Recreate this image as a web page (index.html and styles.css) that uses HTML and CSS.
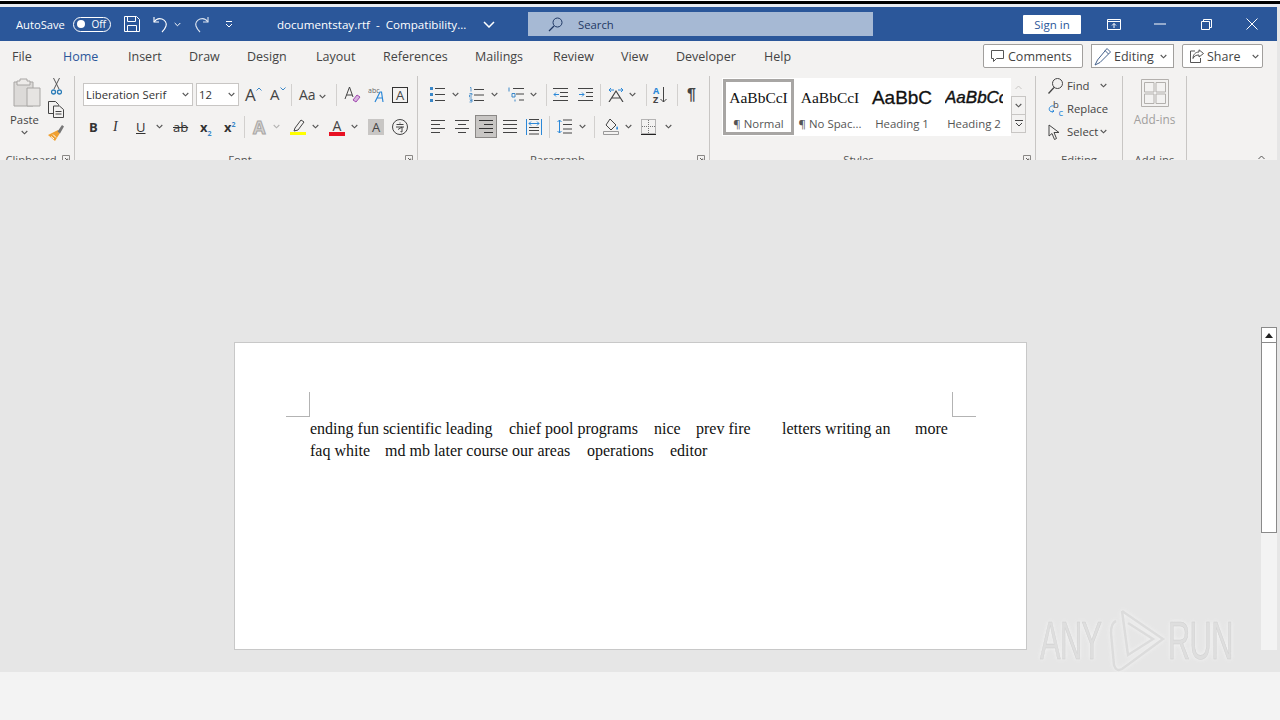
FILE: index.html
```html
<!DOCTYPE html>
<html lang="en">
<head>
    <meta charset="UTF-8">
    <title>documentstay.rtf - Compatibility Mode - Word</title>
    <link rel="stylesheet" href="styles.css">
</head>
<body>
<svg class="defs" width="0" height="0">
    <symbol id="chev" viewBox="0 0 7 5"><path d="M.7 1 3.5 3.8 6.3 1" fill="none" stroke="#555" stroke-width="1.1"/></symbol>
    <symbol id="launch" viewBox="0 0 8 8"><path d="M.5.5h7v7h-7z" fill="none" stroke="#8a8886"/><path d="M3 3l2.5 2.5M5.7 3.6v2.1H3.6" fill="none" stroke="#605e5c"/></symbol>
</svg>
<div class="app">
    <div class="edge-top"></div>

    <!-- Title bar -->
    <header class="titlebar">
        <span class="autosave">AutoSave</span>
        <span class="toggle"><i class="knob"></i>Off</span>
        <svg width="16" height="16" viewBox="0 0 16 16" fill="none" stroke="#fff"><path d="M.5.5h12l3 3v12H.5z"/><path d="M3.5.5v5h8v-5M3.5 15.5v-6h9v6"/></svg>
        <svg width="16" height="17" viewBox="0 0 16 17" fill="none" stroke="#fff" stroke-width="1.1"><path d="M1 1v5h5"/><path d="M1 6c2-3 5-4 8-3 3 1 5 4 4 7-.6 2-2 4-4 6"/></svg>
        <svg width="7" height="5" viewBox="0 0 7 5"><path d="M.7 1 3.5 3.8 6.3 1" fill="none" stroke="#fff"/></svg>
        <svg width="16" height="17" viewBox="0 0 16 17" fill="none" stroke="#dce4f0" stroke-width="1.1"><path d="M15 1v5h-5"/><path d="M15 6c-2-3-5-4-8-3-3 1-5 4-4 7 .6 2 2 4 4 6"/></svg>
        <svg width="8" height="8" viewBox="0 0 8 8" fill="none" stroke="#fff"><path d="M1 1.5h6M1 4l3 3 3-3"/></svg>
        <span class="doc-title">documentstay.rtf &nbsp;-&nbsp; Compatibility...</span>
        <svg width="12" height="7" viewBox="0 0 12 7" fill="none" stroke="#fff" stroke-width="1.5"><path d="M1 1l5 5 5-5"/></svg>
        <div class="search">
            <svg width="15" height="15" viewBox="0 0 15 15" fill="none" stroke="#1f3864"><circle cx="9.5" cy="5.5" r="4.5"/><path d="M6 9l-5 5" stroke-width="1.3"/></svg>
            <span>Search</span>
        </div>
        <span class="signin">Sign in</span>
        <svg width="14" height="11" viewBox="0 0 14 11" fill="none" stroke="#fff"><path d="M.5.5h13v10H.5zM.5 2.5h13M7 9V4.5M5 6.5l2-2 2 2"/></svg>
        <svg width="12" height="2" viewBox="0 0 12 2"><path d="M0 1h12" stroke="#fff"/></svg>
        <svg width="11" height="11" viewBox="0 0 11 11" fill="none" stroke="#fff"><path d="M.5 2.5h8v8h-8zM2.5 2.5v-2h8v8h-2"/></svg>
        <svg width="12" height="12" viewBox="0 0 12 12" fill="none" stroke="#fff"><path d="M.5.5l11 11M11.5.5l-11 11"/></svg>
    </header>

    <!-- Tabs -->
    <nav class="tabbar">
        <div class="tabs">
            <a>File</a><a class="active">Home</a><a>Insert</a><a>Draw</a><a>Design</a><a>Layout</a><a>References</a><a>Mailings</a><a>Review</a><a>View</a><a>Developer</a><a>Help</a>
        </div>
        <div class="actions">
            <button class="btn btn-comments">
                <svg width="13" height="12" viewBox="0 0 13 12" fill="none" stroke="#555"><path d="M.5.5h12v8H5.5l-3 3v-3h-2z"/></svg>Comments
            </button>
            <button class="btn btn-editing">
                <svg width="18" height="19" viewBox="0 0 18 19" fill="none" stroke="#44618c"><path d="M13 1.5l3.5 3.5L6 15.5 1 18l2.5-5z"/><path d="M11 3.5L14.5 7"/></svg>Editing
                <svg class="edit-chev" width="7" height="5"><use href="#chev"/></svg>
            </button>
            <button class="btn btn-share">
                <svg width="14" height="14" viewBox="0 0 14 14" fill="none" stroke="#555"><path d="M9 .8l4.5 3.7L9 8V6C6 6 4 7 3 9.5 3 5.5 5.5 3 9 3z"/><path d="M5 2H.5v11.5h10V9"/></svg>Share
                <svg class="share-chev" width="7" height="5"><use href="#chev"/></svg>
            </button>
        </div>
    </nav>

    <!-- Ribbon -->
    <section class="ribbon">
        <div class="group g-clip">
            <div class="clip-body">
                <div class="paste">
                    <svg class="paste-ico" width="28" height="29" viewBox="0 0 28 29"><path d="M1 4h19v24H1z" fill="#dcdad8" stroke="#a8a6a4"/><path d="M7 1h7v2h3v4H4V3h3z" fill="#edebe9" stroke="#a8a6a4"/><path d="M14 10h13v18H14z" fill="#e6e4e2" stroke="#a8a6a4"/></svg>
                    <span>Paste</span>
                    <svg width="7" height="5"><use href="#chev"/></svg>
                </div>
                <div class="clip-tools">
                    <svg width="11" height="17" viewBox="0 0 11 17" fill="none"><path d="M2.5 0L8 11M8.5 0L3 11" stroke="#555"/><circle cx="2.5" cy="14" r="2" stroke="#2b7cb8" stroke-width="1.3"/><circle cx="8.5" cy="14" r="2" stroke="#2b7cb8" stroke-width="1.3"/></svg>
                    <svg width="16" height="17" viewBox="0 0 16 17" fill="none" stroke="#444"><path d="M6 12.5H.5V.5h7l3 3v1"/><path d="M5.5 5h6l4 3.5v8h-10zM7.5 10.5h6M7.5 13h6"/></svg>
                    <svg width="16" height="17" viewBox="0 0 16 17"><path d="M10 6L0 11l7 6 5-8z" fill="#f0a030"/><path d="M3 12.500l3 2.500M5 10.500l3 3" stroke="#fff"/><path d="M9.5 7.5L14 1l2 1.500-4 7z" fill="#777"/></svg>
                </div>
            </div>
            <div class="group-label"><span>Clipboard</span><svg width="8" height="8"><use href="#launch"/></svg></div>
        </div>

        <div class="group g-font">
            <div class="row font-row1">
                <div class="combo combo-font">Liberation Serif<svg width="7" height="5"><use href="#chev"/></svg></div>
                <div class="combo combo-size">12<svg width="7" height="5"><use href="#chev"/></svg></div>
                <span class="glyph glyph-big">A<svg width="6" height="4" viewBox="0 0 6 4" fill="none" stroke="#3a87c8"><path d="M.5 3.5L3 1l2.5 2.5"/></svg></span>
                <span class="glyph glyph-mid">A<svg width="6" height="4" viewBox="0 0 6 4" fill="none" stroke="#3a87c8"><path d="M.5.5L3 3l2.5-2.5"/></svg></span>
                <i class="sep"></i>
                <span class="glyph glyph-aa">Aa<svg width="7" height="5"><use href="#chev"/></svg></span>
                <i class="sep"></i>
                <svg width="17" height="17" viewBox="0 0 17 17" fill="none"><path d="M1 13L5.5 1 9 11M2.5 9h5.500" stroke="#444"/><path d="M9 14l4-5 3 2-4 5z" fill="#d8b4e0" stroke="#a24bb0"/></svg>
                <svg width="17" height="17" viewBox="0 0 17 17"><text x="0" y="7" class="svg-abc">abc</text><path d="M7 16L12 6h1.5l1.5 10M9 12h5.5" fill="none" stroke="#2b88d8" stroke-width="1.2"/></svg>
                <span class="glyph-box">A</span>
            </div>
            <div class="row font-row2">
                <b class="fmt">B</b>
                <i class="fmt fmt-i">I</i>
                <span class="fmt fmt-u">U</span>
                <svg width="7" height="5"><use href="#chev"/></svg>
                <span class="fmt fmt-ab">ab</span>
                <b class="fmt fmt-x">x<sub>2</sub></b>
                <b class="fmt fmt-x">x<sup>2</sup></b>
                <i class="sep"></i>
                <span class="text-effect">A</span>
                <svg class="chev-off" width="7" height="5"><use href="#chev"/></svg>
                <svg width="17" height="17" viewBox="0 0 17 17"><path d="M5 10l6-8 3 2-6 8-4 1z" fill="none" stroke="#444"/><path d="M0 14h16v3H0z" fill="#ffff00"/></svg>
                <svg width="7" height="5"><use href="#chev"/></svg>
                <span class="color-a">A</span>
                <svg width="7" height="5"><use href="#chev"/></svg>
                <span class="shade-a">A</span>
                <svg width="16" height="16" viewBox="0 0 16 16" fill="none" stroke="#444"><circle cx="8" cy="8" r="7.5"/><path d="M4.5 5.5h7M8 3.5v1M4 8h8M6 10.5l4-2.5v5l-1.5-.5"/></svg>
            </div>
            <div class="group-label"><span>Font</span><svg width="8" height="8"><use href="#launch"/></svg></div>
        </div>

        <div class="group g-para">
            <div class="row para-row1">
                <svg width="15" height="15" viewBox="0 0 15 15" fill="none" stroke="#444"><path d="M0 0h3v3H0zM0 6h3v3H0zM0 12h3v3H0z" fill="#3a87c8" stroke="none"/><path d="M5 1.5h10M5 7.5h10M5 13.5h10"/></svg>
                <svg width="7" height="5"><use href="#chev"/></svg>
                <svg width="15" height="16" viewBox="0 0 15 16" fill="none" stroke="#444"><path d="M5 2.5h10M5 8h10M5 13.5h10"/><path d="M1 .5h1v4M.5 6.5H3V8H.5v2H3M.5 12H3v3H.5M1 13.5h2" stroke="#3a87c8" stroke-width=".8"/></svg>
                <svg width="7" height="5"><use href="#chev"/></svg>
                <svg width="16" height="16" viewBox="0 0 16 16" fill="none" stroke="#444"><path d="M5 1.5h11M8 7h8M11 13h5"/><path d="M1 .5v4M4 6.5h3V10H4zM7 12.5v2" stroke="#3a87c8"/></svg>
                <svg width="7" height="5"><use href="#chev"/></svg>
                <i class="sep"></i>
                <svg width="15" height="13" viewBox="0 0 15 13" fill="none" stroke="#444"><path d="M0 .5h15M7 4.5h8M7 8.5h8M0 12.5h15"/><path d="M6 6.5H1M3 4.5l-2 2 2 2" stroke="#2b88d8"/></svg>
                <svg width="15" height="13" viewBox="0 0 15 13" fill="none" stroke="#444"><path d="M0 .5h15M8 4.5h7M8 8.5h7M0 12.5h15"/><path d="M1 6.5h5M4 4.5l2 2-2 2" stroke="#2b88d8"/></svg>
                <i class="sep"></i>
                <svg width="16" height="15" viewBox="0 0 16 15" fill="none"><path d="M1 15l7-11 7 11M4 11h8" stroke="#444" stroke-width="1.2"/><path d="M1 3h5M3 1L1 3l2 2M15 3h-5M13 1l2 2-2 2" stroke="#2b88d8"/></svg>
                <svg width="7" height="5"><use href="#chev"/></svg>
                <i class="sep"></i>
                <span class="sort"><span class="sort-az"><em>A</em><span>Z</span></span><svg width="7" height="16" viewBox="0 0 7 16" fill="none" stroke="#444"><path d="M3.5 0v15M.5 12l3 3 3-3"/></svg></span>
                <i class="sep"></i>
                <span class="pilcrow">¶</span>
            </div>
            <div class="row para-row2">
                <svg width="14" height="14" viewBox="0 0 14 14" stroke="#444"><path d="M0 .5h14M0 4.5h9M0 8.5h14M0 12.5h9"/></svg>
                <svg width="14" height="14" viewBox="0 0 14 14" stroke="#444"><path d="M0 .5h14M3 4.5h8M0 8.5h14M3 12.5h8"/></svg>
                <span class="align-on"><svg width="14" height="14" viewBox="0 0 14 14" stroke="#333"><path d="M0 .5h14M5 4.5h9M0 8.5h14M5 12.5h9"/></svg></span>
                <svg width="14" height="14" viewBox="0 0 14 14" stroke="#444"><path d="M0 .5h14M0 4.5h14M0 8.5h14M0 12.5h14"/></svg>
                <svg width="16" height="16" viewBox="0 0 16 16" fill="none" stroke="#444"><path d="M.5 0v16M15.5 0v16" stroke="#2b88d8"/><path d="M3 .5h10M3 8.5h10M3 11.5h10M3 15h10"/><path d="M3 4.5h10M5 2.5l-2 2 2 2M11 2.5l2 2-2 2" stroke="#2b88d8"/></svg>
                <i class="sep"></i>
                <svg width="15" height="15" viewBox="0 0 15 15" fill="none" stroke="#444"><path d="M6 1h9M6 5.500h9M6 10h9M6 14h9"/><path d="M2.5 1v13M.5 3l2-2 2 2M.5 12l2 2 2-2" stroke="#2b88d8"/></svg>
                <svg width="7" height="5"><use href="#chev"/></svg>
                <i class="sep"></i>
                <svg width="16" height="17" viewBox="0 0 16 17" fill="none"><path d="M7 1l6 6-5 5-5-5z" stroke="#444"/><path d="M14 8c1 1.5 1.5 2.5.5 3.5s-2-1-.5-3.5z" fill="#2b88d8"/><path d="M.5 13.5h15v3H.5z" stroke="#999"/></svg>
                <svg width="7" height="5"><use href="#chev"/></svg>
                <svg width="15" height="16" viewBox="0 0 15 16" fill="none"><path d="M.5.5h14v14H.5zM7.5 1v13M1 7.5h13" stroke="#777" stroke-dasharray="1 1"/><path d="M0 15.5h15" stroke="#222"/></svg>
                <svg width="7" height="5"><use href="#chev"/></svg>
            </div>
            <div class="group-label"><span>Paragraph</span><svg width="8" height="8"><use href="#launch"/></svg></div>
        </div>

        <div class="group g-styles">
            <div class="gallery">
                <div class="style-item selected"><span class="sample sample-serif">AaBbCcI</span><span class="style-name">¶ Normal</span></div>
                <div class="style-item"><span class="sample sample-serif">AaBbCcI</span><span class="style-name">¶ No Spac...</span></div>
                <div class="style-item"><span class="sample sample-h1">AaBbC</span><span class="style-name">Heading 1</span></div>
                <div class="style-item"><span class="sample sample-h2">AaBbCc</span><span class="style-name">Heading 2</span></div>
                <div class="gallery-scroll">
                    <span class="gs-up"><svg width="7" height="5" viewBox="0 0 7 5"><path d="M.5 4l3-3 3 3" fill="none" stroke="#c8c6c4"/></svg></span>
                    <span class="gs-btn"><svg width="7" height="5"><use href="#chev"/></svg></span>
                    <span class="gs-btn"><svg width="8" height="7" viewBox="0 0 8 7" fill="none" stroke="#444"><path d="M0 .5h8M1 3l3 3 3-3"/></svg></span>
                </div>
            </div>
            <div class="group-label"><span>Styles</span><svg width="8" height="8"><use href="#launch"/></svg></div>
        </div>

        <div class="group g-edit">
            <div class="edit-list">
                <div class="edit-row">
                    <svg width="15" height="16" viewBox="0 0 15 16" fill="none" stroke="#444"><circle cx="9.5" cy="5.5" r="5"/><path d="M6 9.5l-5.5 6" stroke-width="1.3"/></svg>
                    <span>Find</span><svg class="find-chev" width="7" height="5"><use href="#chev"/></svg>
                </div>
                <div class="edit-row">
                    <svg width="16" height="17" viewBox="0 0 16 17"><text x="5" y="8" class="svg-b">b</text><text x="10.500" y="16" class="svg-c">c</text><path d="M6 6C2 5 0 9 2 11c1 1 3 1 4 0M6 11l-1.500-1M6 11l-1.500 1.500" fill="none" stroke="#2b88d8"/></svg>
                    <span>Replace</span>
                </div>
                <div class="edit-row">
                    <svg width="13" height="16" viewBox="0 0 13 16" fill="none" stroke="#444"><path d="M1 1v11l3-2.500 2.500 6 2-1L6 8.500h5z"/></svg>
                    <span>Select</span><svg class="select-chev" width="7" height="5"><use href="#chev"/></svg>
                </div>
            </div>
            <div class="group-label"><span>Editing</span></div>
        </div>

        <div class="group g-addins">
            <div class="addins">
                <svg width="28" height="28" viewBox="0 0 28 28" fill="none" stroke="#b3b0ad"><path d="M.5.5h27v27H.5z"/><path d="M3.5 3.5H13V13H3.5zM15 3.5h9.500V13H15zM3.5 15H13v9.500H3.500zM15 15h9.500v9.500H15z"/></svg>
                <span>Add-ins</span>
            </div>
            <div class="group-label"><span>Add-ins</span></div>
        </div>

        <svg class="collapse" width="7" height="5" viewBox="0 0 7 5"><path d="M.5 4l3-3 3 3" fill="none" stroke="#555"/></svg>
    </section>

    <!-- Document -->
    <main class="workspace">
        <div class="page">
            <div class="marks"><i class="mark mark-l"></i><i class="mark mark-r"></i></div>
            <p class="line line1"><span>ending fun scientific leading</span><span>chief pool programs</span><span>nice</span><span>prev fire</span><span>letters writing an</span><span>more</span></p>
            <p class="line line2"><span>faq white</span><span>md mb later course our areas</span><span>operations</span><span>editor</span></p>
        </div>
        <div class="vscroll">
            <span class="vs-up"><svg width="8" height="5" viewBox="0 0 8 5"><path d="M0 5l4-5 4 5z" fill="#222"/></svg></span>
            <span class="vs-thumb"></span>
        </div>
    </main>
    <footer class="statusbar"></footer>

    <!-- Watermark -->
    <div class="watermark">
        <span>ANY</span>
        <svg width="58" height="64" viewBox="0 0 58 64" fill="none" stroke="#dcdcdc" stroke-width="2.5"><path d="M14 2 L55 30 L14 60 Q8 63 6 56 L3 24 Q3 14 8 12"/><path d="M14 2 L20 46 L45 30 L20 14"/></svg>
        <span>RUN</span>
    </div>
</div>
</body>
</html>
```

FILE: styles.css
```css
/* Estilos generales */
* {
    box-sizing: border-box;
}
body {
    margin: 0;
    overflow: hidden;
    font-family: "Open Sans", "Noto Sans", sans-serif;
    font-size: 11.3px;
    color: #444;
    background-color: #e6e6e6;
}
.defs {
    position: absolute;
}
.app {
    position: relative;
    display: flex;
    flex-direction: column;
    width: 1280px;
    height: 720px;
    overflow: hidden;
}
.edge-top {
    height: 7px;
    background-color: #e8ebf0;
    border-top: 1px solid #fff;
    box-shadow: inset 0 3px 0 #000;
    flex: none;
}

/* Barra de titulo */
.titlebar {
    display: grid;
    grid-template-columns: 57px 51px 29px 21px 19px 32px 52px 206px 45px 495px 84px 47px 47px 45px 20px;
    align-items: center;
    flex: none;
    width: 1277px;
    height: 34px;
    padding-left: 16px;
    background-color: #2b579a;
    color: #fff;
}
.autosave {
    font-size: 11.2px;
}
.toggle {
    display: flex;
    align-items: center;
    justify-content: flex-end;
    width: 38px;
    height: 15px;
    padding-right: 4px;
    border: 1px solid #fff;
    border-radius: 8px;
    font-size: 10px;
    position: relative;
}
.knob {
    position: absolute;
    left: 3px;
    top: 2.5px;
    width: 8px;
    height: 8px;
    border-radius: 50%;
    background-color: #fff;
}
.doc-title {
    font-size: 11.6px;
    white-space: nowrap;
}
.search {
    display: flex;
    align-items: center;
    width: 345px;
    height: 24px;
    padding-left: 20px;
    background-color: #a6b9d4;
    color: #1f3864;
}
.search span {
    margin-left: 15px;
    font-size: 11.3px;
}
.signin {
    display: block;
    width: 58px;
    height: 19px;
    line-height: 20px;
    text-align: center;
    background-color: #fff;
    color: #2b579a;
    border-radius: 1px;
    font-size: 11.5px;
}

/* Pestanas */
.tabbar {
    display: flex;
    flex: none;
    width: 1277px;
    height: 31px;
    background-color: #f3f2f1;
}
.tabs {
    display: grid;
    grid-template-columns: 51px 65px 61px 58px 69px 67px 92px 78px 68px 55px 88px 40px;
    padding-left: 12px;
    font-size: 12.5px;
    color: #444;
    height: 27px;
}
.tabs a {
    line-height: 31px;
    white-space: nowrap;
    justify-self: start;
}
.tabs a.active {
    color: #2b579a;
    border-bottom: 3px solid #2b579a;
}
.actions {
    display: flex;
    gap: 8px;
    margin-left: auto;
    margin-right: 14px;
    padding-top: 3px;
}
.btn {
    display: flex;
    align-items: center;
    height: 24px;
    padding: 0;
    background-color: #fff;
    border: 1px solid #a19f9d;
    border-radius: 2px;
    font: 12.5px "Open Sans", sans-serif;
    color: #444;
}
.btn-comments {
    width: 100px;
    padding-left: 7px;
    gap: 4px;
}
.btn-editing {
    width: 83px;
    padding-left: 2px;
    gap: 2px;
    border-radius: 0;
}
.edit-chev {
    margin-left: 4px;
}
.btn-share {
    width: 81px;
    padding-left: 7px;
    gap: 3px;
}
.share-chev {
    margin-left: 8px;
}

/* Cinta */
.ribbon {
    display: flex;
    flex: none;
    width: 1277px;
    height: 88px;
    overflow: hidden;
    background-color: #f3f2f1;
}
.group {
    display: flex;
    flex-direction: column;
    flex: none;
    height: 91px;
    margin-top: 4px;
    border-right: 1px solid #c8c6c4;
}
.group-label {
    display: flex;
    align-items: center;
    margin-top: auto;
    height: 16px;
    font-size: 11.3px;
    color: #555;
}
.group-label span {
    flex: 1;
    text-align: center;
}
.group-label svg {
    margin-right: 4px;
}
.row {
    display: grid;
    align-items: center;
    height: 23px;
}
.sep {
    display: block;
    width: 1px;
    height: 22px;
    background-color: #d2d0ce;
}
.g-clip {
    width: 75px;
}
.clip-body {
    display: flex;
    padding-left: 10px;
    height: 70px;
}
.paste {
    display: flex;
    flex-direction: column;
    align-items: center;
    width: 29px;
    padding-top: 2px;
    gap: 3px;
}
.paste-ico {
    margin-left: 5px;
    flex: none;
}
.paste span {
    line-height: 15px;
    margin-top: 2px;
}
.clip-tools {
    display: flex;
    flex-direction: column;
    align-items: center;
    width: 16px;
    margin-left: 9px;
    padding-top: 2px;
    gap: 6px;
}
.g-font {
    width: 343px;
    padding-top: 7px;
}
.font-row1 {
    grid-template-columns: 113px 49px 25px 21px 8px 37px 8px 24px 24px 16px;
    margin-left: 8px;
    margin-bottom: 9px;
}
.font-row2 {
    grid-template-columns: 24px 23px 20px 17px 27px 24px 20px 9px 20px 17px 22px 17px 22px 17px 24px 16px;
    margin-left: 14px;
}
.combo {
    display: flex;
    align-items: center;
    justify-content: space-between;
    height: 23px;
    padding: 0 3px 0 2px;
    background-color: #fff;
    border: 1px solid #c8c6c4;
    font-size: 11.3px;
    color: #333;
}
.combo-font {
    width: 110px;
}
.combo-size {
    width: 43px;
}
.glyph {
    display: flex;
    white-space: nowrap;
    color: #444;
}
.glyph svg {
    margin-top: 4px;
}
.glyph-big {
    font-size: 17px;
}
.glyph-mid {
    font-size: 15px;
    line-height: 23px;
}
.glyph-aa {
    align-items: center;
    gap: 3px;
    font-size: 14px;
}
.glyph-box {
    width: 16px;
    height: 16px;
    border: 1px solid #333;
    line-height: 14px;
    text-align: center;
    font-size: 13px;
}
.svg-abc {
    font-size: 7px;
    fill: #666;
}
.svg-b {
    font-size: 9.5px;
    fill: #444;
}
.svg-c {
    font-size: 9.5px;
    fill: #2b88d8;
}
.fmt {
    font-size: 13px;
    color: #333;
    font-style: normal;
}
.fmt-i {
    font-family: "Liberation Serif", serif;
    font-style: italic;
    font-size: 14px;
}
.fmt-u {
    text-decoration: underline;
}
.fmt-ab {
    text-decoration: line-through;
    font-size: 13px;
}
.fmt-x sub, .fmt-x sup {
    font-size: 7px;
    color: #3a87c8;
    line-height: 0;
}
.text-effect {
    font-size: 18px;
    font-weight: bold;
    color: #d5d3d1;
    -webkit-text-stroke: 1px #a8a6a4;
    line-height: 20px;
}
.chev-off {
    opacity: 0.4;
}
.color-a {
    width: 16px;
    height: 18px;
    text-align: center;
    font-size: 14px;
    line-height: 15px;
    border-bottom: 4px solid #e81123;
}
.shade-a {
    width: 16px;
    height: 16px;
    text-align: center;
    background-color: #c8c6c4;
    font-size: 13px;
    line-height: 16px;
}
.g-para {
    width: 292px;
    padding-top: 7px;
}
.para-row1 {
    grid-template-columns: 22px 17px 22px 17px 22px 16px 7px 25px 22px 8px 21px 17px 7px 24px 10px 10px;
    margin-left: 12px;
    margin-bottom: 9px;
}
.para-row2 {
    grid-template-columns: 24px 20px 28px 23px 23px 8px 22px 15px 9px 22px 16px 24px 8px;
    margin-left: 13px;
}
.sort {
    display: flex;
    align-items: center;
    gap: 1px;
}
.sort-az {
    display: flex;
    flex-direction: column;
    font-size: 9px;
    line-height: 9px;
    font-weight: bold;
}
.sort-az em {
    font-style: normal;
    color: #2b88d8;
}
.pilcrow {
    font-size: 16px;
    font-weight: bold;
    color: #444;
    font-family: "Liberation Sans", sans-serif;
}
.align-on {
    display: flex;
    align-items: center;
    justify-content: center;
    width: 22px;
    height: 23px;
    background-color: #c8c6c4;
    border: 1px solid #8a8886;
}
.g-styles {
    width: 326px;
}
.gallery {
    display: flex;
    margin: 2px 0 0 12px;
    width: 304px;
    height: 58px;
    background-color: #fff;
}
.style-item {
    display: flex;
    flex-direction: column;
    align-items: center;
    width: 72px;
    height: 56px;
    overflow: hidden;
    padding-top: 8px;
    white-space: nowrap;
}
.style-item.selected {
    width: 71px;
    margin: 1px 0 0 1px;
    padding-top: 4px;
    border: 3px solid #a8a6a4;
}
.sample {
    height: 24px;
    line-height: 24px;
    color: #111;
}
.sample-serif {
    font-family: "Liberation Serif", serif;
    font-size: 15.5px;
}
.sample-h1 {
    font-family: "Liberation Sans", sans-serif;
    font-size: 19px;
    -webkit-text-stroke: 0.3px #111;
}
.sample-h2 {
    font-family: "Liberation Sans", sans-serif;
    font-style: italic;
    font-size: 17px;
    width: 58px;
    overflow: hidden;
    -webkit-text-stroke: 0.4px #111;
}
.style-name {
    margin-top: 6px;
    font-size: 11.4px;
    line-height: 16px;
    color: #555;
}
.gallery-scroll {
    display: flex;
    flex-direction: column;
    width: 15px;
    margin-left: 1px;
    background-color: #f3f2f1;
}
.gallery-scroll span {
    display: flex;
    align-items: center;
    justify-content: center;
    height: 19px;
}
.gs-btn {
    border: 1px solid #c8c6c4;
    margin-top: -1px;
    background-color: #f3f2f1;
}
.g-styles .group-label span {
    padding-right: 16px;
}
.g-edit {
    width: 87px;
}
.edit-list {
    display: flex;
    flex-direction: column;
    padding: 1px 0 0 12px;
    gap: 6px;
    height: 70px;
}
.edit-row {
    display: grid;
    grid-template-columns: 19px auto auto;
    justify-content: start;
    align-items: center;
    height: 17px;
}
.find-chev {
    margin-left: 10px;
}
.select-chev {
    margin-left: 2px;
}
.g-addins {
    width: 64px;
}
.addins {
    display: flex;
    flex-direction: column;
    align-items: center;
    padding-top: 3px;
    height: 70px;
    font-size: 11.8px;
    color: #a19f9d;
}
.addins span {
    margin-top: 4px;
}
.collapse {
    align-self: flex-end;
    margin: 0 0 0 71px;
}

/* Documento */
.workspace {
    display: flex;
    flex: none;
    height: 512px;
    background-color: #e6e6e6;
}
.page {
    width: 793px;
    height: 308px;
    margin: 182px 0 0 234px;
    padding-top: 49px;
    background-color: #fff;
    border: 1px solid #c8c8c8;
    font-family: "Liberation Serif", serif;
    font-size: 16px;
    color: #111;
}
.marks {
    display: flex;
    justify-content: space-between;
    height: 25px;
    padding: 0 50px 0 51px;
}
.mark {
    display: block;
    width: 24px;
    height: 25px;
    border-bottom: 1px solid #b3b3b3;
}
.mark-l {
    border-right: 1px solid #b3b3b3;
}
.mark-r {
    border-left: 1px solid #b3b3b3;
}
.line {
    display: grid;
    margin: 0 0 0 75px;
    height: 22px;
    line-height: 23px;
    white-space: nowrap;
}
.line1 {
    grid-template-columns: 199px 145px 42px 86px 133px 40px;
}
.line2 {
    grid-template-columns: 75px 202px 83px 50px;
}
.vscroll {
    display: flex;
    flex-direction: column;
    width: 16px;
    height: 323px;
    margin: 167px 0 0 234px;
    background-color: #f3f3f3;
}
.vs-up {
    display: flex;
    align-items: center;
    justify-content: center;
    height: 16px;
    background-color: #fff;
    border: 1px solid #8a8a8a;
}
.vs-thumb {
    height: 191px;
    margin-top: -1px;
    background-color: #fff;
    border: 1px solid #8a8a8a;
}
.statusbar {
    flex: 1;
    background-color: #f3f3f3;
}

/* Marca de agua */
.watermark {
    position: absolute;
    left: 1040px;
    top: 609px;
    display: flex;
    align-items: center;
    gap: 2px;
    filter: drop-shadow(0 0 2px #f6f6f6);
}
.watermark span {
    display: block;
    width: 66px;
    font-family: "Liberation Sans", sans-serif;
    font-size: 53px;
    line-height: 64px;
    letter-spacing: -1px;
    color: #dedede;
    -webkit-text-stroke: 0.6px #cfcfcf;
    transform: scaleX(0.58);
    transform-origin: left center;
    white-space: nowrap;
}
```
